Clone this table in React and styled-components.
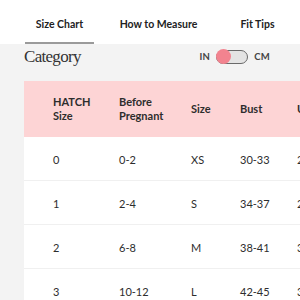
import React from "react";
import styled, { createGlobalStyle } from "styled-components";

const Global = createGlobalStyle`
  html, body { margin: 0; padding: 0; background: #f3f3f3; }
  body { font-family: "Lato", "Liberation Sans", sans-serif; color: #2b2b2b; width: 300px; height: 300px; overflow: hidden; }
`;

const Page = styled.div`
  width: 300px;
  height: 300px;
  overflow: hidden;
  display: flex;
  flex-direction: column;
  & > * { flex-shrink: 0; }
`;

const Tabs = styled.nav`
  height: 44px;
  background: #fff;
  display: flex;
  align-items: stretch;
  padding-left: 25px;
`;

const Tab = styled.div`
  width: ${(p) => p.$w}px;
  display: flex;
  align-items: center;
  justify-content: center;
  font-weight: 700;
  font-size: 10.5px;
  color: #222;
  white-space: nowrap;
  border-bottom: 2px solid ${(p) => (p.$active ? "#9a9a9a" : "transparent")};
  box-sizing: border-box;
  padding-top: 6px;
`;

const Bar = styled.div`
  height: 37px;
  box-sizing: border-box;
  display: flex;
  align-items: center;
  padding: 0 30px 12px 24px;
  justify-content: space-between;
`;

const Title = styled.h2`
  margin: 0;
  font-family: "Liberation Serif", serif;
  font-weight: 400;
  font-size: 17px;
  line-height: 20px;
  letter-spacing: -0.7px;
  color: #333;
`;

const Units = styled.div`
  display: flex;
  align-items: center;
  gap: 6px;
  font-size: 9.5px;
  font-weight: 700;
  color: #444;
  letter-spacing: 0.3px;
`;

const Switch = styled.div`
  width: 32px;
  height: 14px;
  box-sizing: border-box;
  border: 1.2px solid #6a6a6a;
  border-radius: 8px;
  background: #e4e4e4;
  display: flex;
  align-items: center;
`;

const Knob = styled.div`
  width: 15px;
  height: 15px;
  border-radius: 50%;
  background: #f2838f;
  margin-left: -1px;
`;

const Table = styled.div`
  margin-left: 24px;
  display: flex;
  flex-direction: column;
  & > * { flex-shrink: 0; }
`;

const Row = styled.div`
  display: grid;
  grid-template-columns: 66px 72px 49px 57px 60px;
  padding-left: 29px;
  height: ${(p) => (p.$head ? 56 : 44)}px;
  box-sizing: border-box;
  align-items: center;
  background: ${(p) => (p.$head ? "#fdd4d5" : "#fff")};
  border-bottom: ${(p) => (p.$head ? "none" : "1px solid #f0f0f0")};
  font-size: 11px;
  font-weight: ${(p) => (p.$head ? 700 : 400)};
  line-height: 14px;
  color: #2d2d2d;
  white-space: nowrap;
  overflow: hidden;
  padding-top: ${(p) => (p.$head ? 0 : 3)}px;
`;

const Cell = styled.div``;

const rows = [
  ["0", "0-2", "XS", "30-33", "27-30"],
  ["1", "2-4", "S", "34-37", "29-32"],
  ["2", "6-8", "M", "38-41", "31-34"],
  ["3", "10-12", "L", "42-45", "33-36"],
];

export default function App() {
  return (
    <Page>
      <Global />
      <Tabs>
        <Tab $active $w={69}>Size Chart</Tab>
        <Tab $w={129}>How to Measure</Tab>
        <Tab $w={69}>Fit Tips</Tab>
      </Tabs>
      <Bar>
        <Title>Category</Title>
        <Units>
          <span>IN</span>
          <Switch><Knob /></Switch>
          <span>CM</span>
        </Units>
      </Bar>
      <Table>
        <Row $head>
          <Cell>HATCH<br />Size</Cell>
          <Cell>Before<br />Pregnant</Cell>
          <Cell>Size</Cell>
          <Cell>Bust</Cell>
          <Cell>Underbust</Cell>
        </Row>
        {rows.map((r) => (
          <Row key={r[0]}>
            {r.map((c, i) => <Cell key={i}>{c}</Cell>)}
          </Row>
        ))}
      </Table>
    </Page>
  );
}
